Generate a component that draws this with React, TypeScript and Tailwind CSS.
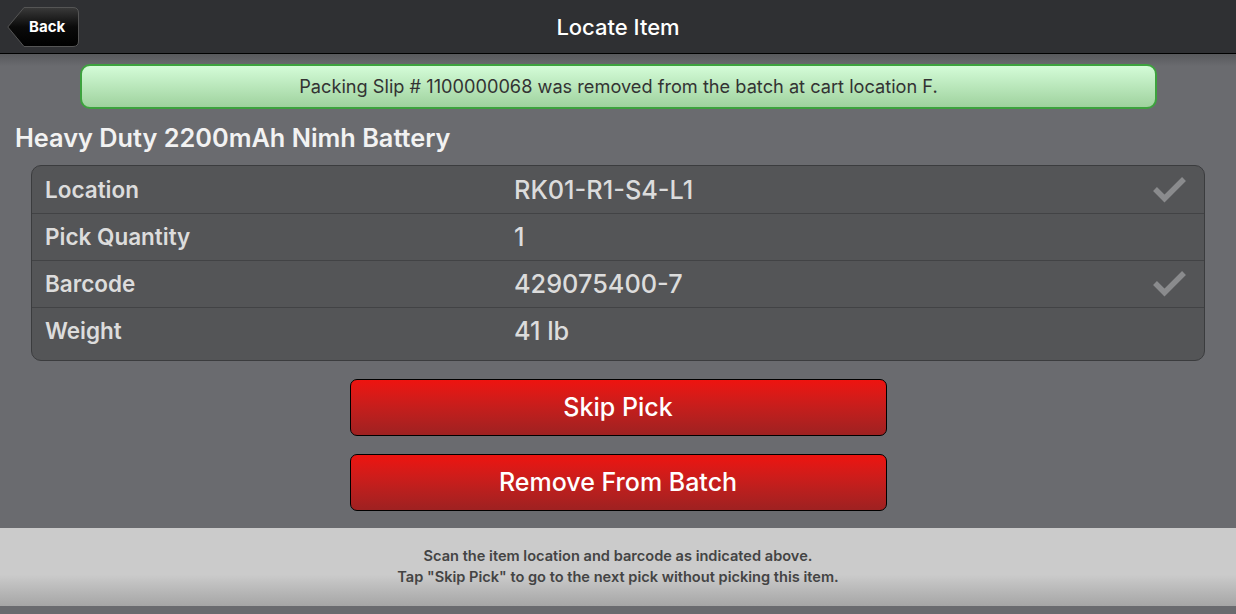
const rows = [
  { label: 'Location', value: 'RK01-R1-S4-L1', done: true },
  { label: 'Pick Quantity', value: '1', done: false },
  { label: 'Barcode', value: '429075400-7', done: true },
  { label: 'Weight', value: '41 lb', done: false },
];

const Check = () => (
  <svg width="34" height="26" viewBox="0 0 34 26" className="text-[#8a8b8d]">
    <path d="M3 12 L12.5 21.5 L32 2" fill="none" stroke="currentColor" strokeWidth="5.5" />
  </svg>
);

const BackButton = () => (
  <button className="relative ml-[7px] flex h-[39px] items-center">
    <svg width="72" height="40" viewBox="0 0 72 40" className="absolute left-0 top-0">
      <defs>
        <linearGradient id="backGrad" x1="0" y1="0" x2="0" y2="1">
          <stop offset="0" stopColor="#3a3a3a" />
          <stop offset="0.5" stopColor="#0a0a0a" />
          <stop offset="1" stopColor="#000" />
        </linearGradient>
      </defs>
      <path
        d="M17 0.5 H66 Q71.5 0.5 71.5 6 V34 Q71.5 39.5 66 39.5 H17 L0.8 20 Z"
        fill="url(#backGrad)"
        stroke="#555"
        strokeWidth="1"
      />
    </svg>
    <span className="relative pl-[22px] pr-[12px] pt-[2px] text-[15px] font-bold text-white">Back</span>
  </button>
);

export default function App() {
  return (
    <div className="flex h-[614px] w-[1236px] flex-col bg-[#6a6b6f] font-['Inter','Noto_Sans',sans-serif]">
      <header className="relative flex h-[54px] shrink-0 items-center border-b border-black bg-[#2f3033]">
        <BackButton />
        <h1 className="pointer-events-none absolute inset-x-0 pt-[2px] text-center text-[22px] font-medium text-white">
          Locate Item
        </h1>
      </header>

      <main className="flex flex-1 flex-col bg-gradient-to-b from-[#58595c] to-[#6a6b6f] to-[12px]">
        <div className="mx-[80px] mt-[10px] flex h-[45px] w-[1077px] items-center justify-center rounded-[10px] border-2 border-[#3da23e] bg-gradient-to-b from-[#d4fcd8] to-[#9fd29e] text-[18.2px] text-[#333]">
          Packing Slip # 1100000068 was removed from the batch at cart location F.
        </div>

        <h2 className="ml-[15px] mt-[15px] text-[25.3px] font-semibold leading-[28px] text-[#f2f2f2]">
          Heavy Duty 2200mAh Nimh Battery
        </h2>

        <div className="mx-[31px] mt-[13px] overflow-hidden rounded-[10px] border border-[#3b3c3e] bg-[#545557] pb-[6px]">
          {rows.map((r, i) => (
            <div
              key={r.label}
              className={`flex h-[47px] items-center ${i > 0 ? 'border-t border-[#424345]' : ''}`}
            >
              <div className="w-[482px] pl-[13px] text-[22.5px] font-semibold text-[#dcdcdc]">{r.label}</div>
              <div className="flex-1 text-[25.3px] font-medium text-[#dcdcdc]">{r.value}</div>
              <div className="w-[52px] pr-[16px]">{r.done && <Check />}</div>
            </div>
          ))}
        </div>

        <div className="mt-[18px] flex flex-col items-center gap-[18px]">
          {['Skip Pick', 'Remove From Batch'].map((t) => (
            <button
              key={t}
              className="h-[57px] w-[537px] rounded-[7px] border border-black bg-gradient-to-b from-[#ee130f] to-[#9e2121] text-[25px] font-medium text-white"
            >
              {t}
            </button>
          ))}
        </div>

        <footer className="mb-[8px] mt-auto flex h-[78px] flex-col items-center justify-center bg-gradient-to-b from-[#cbcbcb] from-60% to-[#a6a6a6] text-[14.6px] font-semibold leading-[21px] text-[#444]">
          <p>Scan the item location and barcode as indicated above.</p>
          <p>Tap "Skip Pick" to go to the next pick without picking this item.</p>
        </footer>
      </main>
    </div>
  );
}
